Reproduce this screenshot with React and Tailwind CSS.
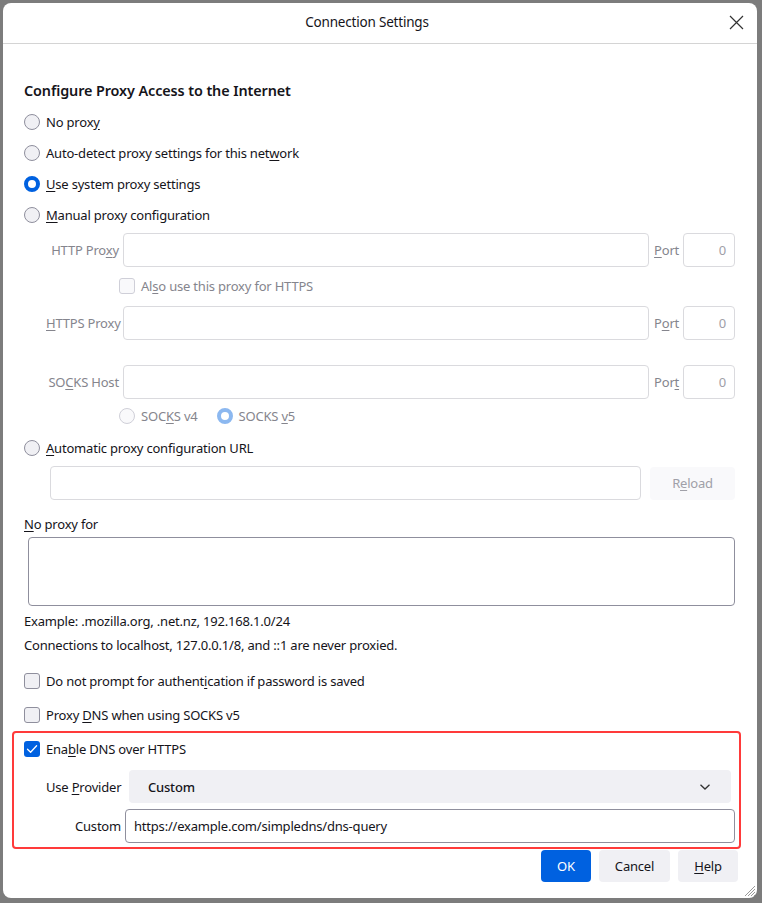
import React from "react";

const FONT = { fontFamily: '"Noto Sans", "Open Sans", sans-serif' };

function Radio({ checked, disabled }) {
  if (checked) {
    return (
      <span
        className={
          "inline-block w-4 h-4 rounded-full shrink-0 bg-white border-[4px] " +
          (disabled ? "border-[#8cb8f0]" : "border-[#0061e0]")
        }
      />
    );
  }
  return (
    <span
      className={
        "inline-block w-4 h-4 rounded-full shrink-0 border " +
        (disabled ? "border-[#cfcfd8] bg-[#f9f9fb]" : "border-[#8f8f9d] bg-[#f0f0f4]")
      }
    />
  );
}

function Check({ checked, disabled }) {
  if (checked) {
    return (
      <span className="inline-flex items-center justify-center w-4 h-4 rounded-[3px] shrink-0 bg-[#0061e0]">
        <svg width="12" height="12" viewBox="0 0 12 12" fill="none">
          <path d="M1.5 6.2 L4.6 9.2 L10.6 2.8" stroke="white" strokeWidth="1.3" strokeLinecap="round" strokeLinejoin="round" />
        </svg>
      </span>
    );
  }
  return (
    <span
      className={
        "inline-block w-4 h-4 rounded-[3px] shrink-0 border " +
        (disabled ? "border-[#cfcfd8] bg-[#f9f9fb]" : "border-[#8f8f9d] bg-[#f0f0f4]")
      }
    />
  );
}

function U({ children }) {
  return <span className="underline underline-offset-2">{children}</span>;
}

function ProxyRow({ label, portLabel }) {
  return (
    <div className="flex items-center h-[34px] ml-[22px]">
      <div className="w-[73px] text-right text-[#85858d] whitespace-nowrap">{label}</div>
      <div className="ml-[4px] w-[527px] h-[34px] rounded-[4px] border border-[#dadade] bg-white" />
      <div className="ml-[5px] w-[24px] text-[#85858d]">{portLabel}</div>
      <div className="ml-[5px] w-[52px] h-[34px] rounded-[4px] border border-[#dadade] bg-white flex items-center justify-end pr-[8px] text-[#a0a0a8]">
        0
      </div>
    </div>
  );
}

export default function App() {
  return (
    <div className="w-[762px] h-[903px] bg-[#7c7c7c] pl-[3px] pt-[3px] overflow-hidden" style={FONT}>
      <div className="relative w-[754px] h-[895px] bg-white rounded-[8px] text-[13px] tracking-[-0.2px] text-[#15141a] leading-[20px] flex flex-col">
        {/* Title bar */}
        <div className="h-[41px] border-b border-[#d4d4d4] flex items-center justify-center relative shrink-0 pr-[26px]">
          <span className="text-[13.5px] mt-[-2px]">Connection Settings</span>
          <svg className="absolute right-[13px] top-[12px]" width="15" height="15" viewBox="0 0 15 15">
            <path d="M1 1 L14 14 M14 1 L1 14" stroke="#333" strokeWidth="1.2" />
          </svg>
        </div>

        {/* Body */}
        <div className="pl-[21px] pr-[22px] flex flex-col">
          <div className="mt-[37px] h-[20px] font-semibold text-[14.4px] tracking-[-0.1px] leading-[20px]">
            Configure Proxy Access to the Internet
          </div>
          <div className="mt-[5px] flex items-center h-[31px] gap-[6px]">
            <Radio /> <span>No prox<U>y</U></span>
          </div>
          <div className="flex items-center h-[31px] gap-[6px]">
            <Radio /> <span>Auto-detect proxy settings for this net<U>w</U>ork</span>
          </div>
          <div className="flex items-center h-[31px] gap-[6px]">
            <Radio checked /> <span><U>U</U>se system proxy settings</span>
          </div>
          <div className="flex items-center h-[31px] gap-[6px]">
            <Radio /> <span><U>M</U>anual proxy configuration</span>
          </div>

          <div className="mt-[3px]">
            <ProxyRow label={<span>HTTP Pro<U>x</U>y</span>} portLabel={<span><U>P</U>ort</span>} />
          </div>
          <div className="flex items-center h-[38px] ml-[95px] gap-[6px]">
            <Check disabled /> <span className="text-[#85858d]">Al<U>s</U>o use this proxy for HTTPS</span>
          </div>
          <div className="mt-[1px]">
            <ProxyRow label={<span><U>H</U>TTPS Proxy</span>} portLabel={<span>P<U>o</U>rt</span>} />
          </div>
          <div className="mt-[25px]">
            <ProxyRow label={<span>SO<U>C</U>KS Host</span>} portLabel={<span>Por<U>t</U></span>} />
          </div>
          <div className="flex items-center h-[34px] ml-[95px] text-[#85858d]">
            <Radio disabled />
            <span className="ml-[6px]">SOC<U>K</U>S v4</span>
            <span className="ml-[19px] flex"><Radio checked disabled /></span>
            <span className="ml-[6px]">SOCKS <U>v</U>5</span>
          </div>
          <div className="flex items-center h-[30px] gap-[6px]">
            <Radio /> <span><U>A</U>utomatic proxy configuration URL</span>
          </div>
          <div className="mt-[3px] flex items-center h-[34px] ml-[26px]">
            <div className="w-[591px] h-[34px] rounded-[4px] border border-[#dadade] bg-white" />
            <div className="ml-[9px] w-[85px] h-[33px] rounded-[4px] bg-[#f9f9fb] flex items-center justify-center text-[#a0a0a8]">
              R<U>e</U>load
            </div>
          </div>
          <div className="mt-[14px] h-[20px]">
            <U>N</U>o proxy for
          </div>
          <div className="mt-[3px] ml-[4px] h-[69px] rounded-[4px] border border-[#8f8f9d] bg-white" />
          <div className="mt-[5px] h-[20px]">Example: .mozilla.org, .net.nz, 192.168.1.0/24</div>
          <div className="mt-[4px] h-[20px]">Connections to localhost, 127.0.0.1/8, and ::1 are never proxied.</div>
          <div className="mt-[10px] flex items-center h-[32px] gap-[6px]">
            <Check /> <span>Do not prompt for authent<U>i</U>cation if password is saved</span>
          </div>
          <div className="mt-[2px] flex items-center h-[32px] gap-[6px]">
            <Check /> <span>Proxy <U>D</U>NS when using SOCKS v5</span>
          </div>

          {/* Highlighted DNS box */}
          <div className="-ml-[12px] -mr-[6px] border-2 border-[#ff3a3a] rounded-[4px] pl-[10px] pr-[4px] pb-[4px] flex flex-col">
            <div className="flex items-center h-[32px] gap-[6px]">
              <Check checked /> <span>Ena<U>b</U>le DNS over HTTPS</span>
            </div>
            <div className="mt-[5px] flex items-center h-[33px]">
              <div className="w-[97px] shrink-0 pl-[22px] whitespace-nowrap">Use <U>P</U>rovider</div>
              <div className="ml-[8px] mr-[4px] flex-1 h-[33px] rounded-[4px] bg-[#f0f0f4] flex items-center pl-[19px] pr-[20px]">
                <span className="flex-1 font-medium">Custom</span>
                <svg width="12" height="8" viewBox="0 0 12 8">
                  <path d="M1.5 1.8 L6 6 L10.5 1.8" stroke="#333" strokeWidth="1.3" fill="none" />
                </svg>
              </div>
            </div>
            <div className="mt-[6px] flex items-center h-[34px]">
              <div className="w-[97px] shrink-0 text-right">Custom</div>
              <div className="ml-[4px] flex-1 h-[34px] rounded-[4px] border border-[#8f8f9d] bg-white flex items-center pl-[8px]">
                https://example.com/simpledns/dns-query
              </div>
            </div>
          </div>

          {/* Buttons */}
          <div className="mt-[1px] flex justify-end gap-[8px] -mr-[3px]">
            <div className="w-[50px] h-[32px] rounded-[4px] bg-[#0061e0] text-white flex items-center justify-center">OK</div>
            <div className="w-[71px] h-[32px] rounded-[4px] bg-[#f0f0f4] flex items-center justify-center">Cancel</div>
            <div className="w-[60px] h-[32px] rounded-[4px] bg-[#f0f0f4] flex items-center justify-center"><U>H</U>elp</div>
          </div>
        </div>

        {/* Resize grip */}
        <svg className="absolute right-[1px] bottom-[1px]" width="14" height="14" viewBox="0 0 14 14">
          <path d="M13 3 L3 13 M13 6 L6 13 M13 9 L9 13 M13 12 L12 13" stroke="#9a9a9a" strokeWidth="1" />
        </svg>
      </div>
    </div>
  );
}
